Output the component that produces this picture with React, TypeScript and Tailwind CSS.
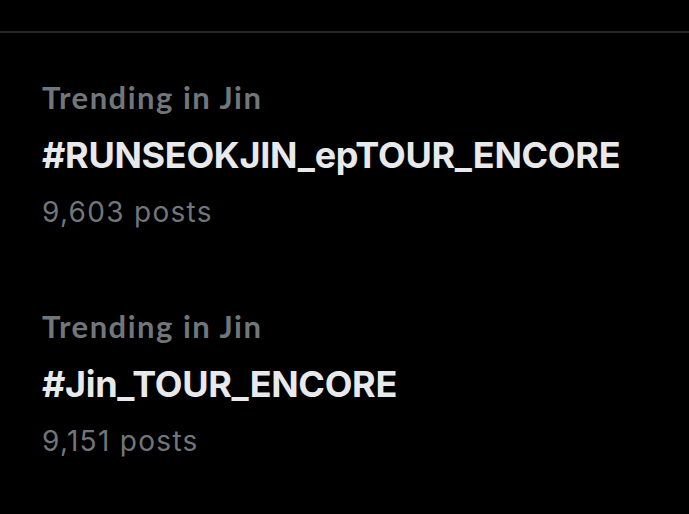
import React from 'react';

interface Trend {
  category: string;
  tag: string;
  posts: string;
}

const trends: Trend[] = [
  { category: 'Trending in Jin', tag: '#RUNSEOKJIN_epTOUR_ENCORE', posts: '9,603 posts' },
  { category: 'Trending in Jin', tag: '#Jin_TOUR_ENCORE', posts: '9,151 posts' },
];

const TrendItem: React.FC<{ trend: Trend }> = ({ trend }) => (
  <div className="pl-[42px] pt-[41px] pb-[28px]">
    <div className="font-['Lato',sans-serif] font-bold text-[31px] leading-[46px] tracking-[1.5px] text-[#71767b]">
      {trend.category}
    </div>
    <div className="font-['Inter',sans-serif] font-bold text-[36px] leading-[70px] tracking-[-0.3px] text-[#e7e9ea]">
      {trend.tag}
    </div>
    <div className="font-['Inter',sans-serif] text-[28px] leading-[44px] tracking-[1.3px] text-[#71767b]">
      {trend.posts}
    </div>
  </div>
);

export default function App() {
  return (
    <div className="w-[689px] h-[514px] bg-black overflow-hidden">
      <div className="h-[31px]" />
      <div className="h-[2px] bg-[#26292c]" />
      {trends.map((t, i) => (
        <TrendItem key={i} trend={t} />
      ))}
    </div>
  );
}
